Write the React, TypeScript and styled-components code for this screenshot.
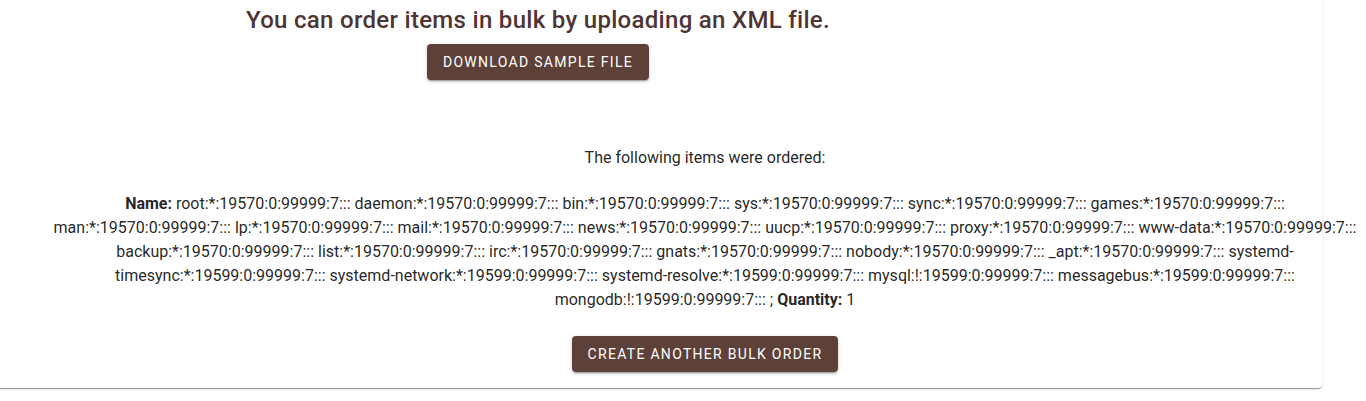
import React from "react";
import styled, { createGlobalStyle } from "styled-components";

const Global = createGlobalStyle`
  html, body {
    margin: 0;
    padding: 0;
    background: #ffffff;
  }
  body {
    font-family: Roboto, "Liberation Sans", Arial, sans-serif;
    color: rgba(0, 0, 0, 0.87);
  }
`;

const Page = styled.div`
  padding: 0 0 13px 0;
  overflow: hidden;
`;

const Card = styled.div`
  width: 1326px;
  margin: -20px 0 0 -4px;
  padding: 24px 0 16px 4px;
  box-sizing: border-box;
  background: #ffffff;
  border-radius: 4px;
  box-shadow: 0px 2px 1px -1px rgba(0, 0, 0, 0.25),
    0px 1px 1px 0px rgba(0, 0, 0, 0.16), 0px 1px 3px 0px rgba(0, 0, 0, 0.12);
`;

const UploadSection = styled.div`
  width: 1076px;
  display: flex;
  flex-direction: column;
  align-items: center;
  gap: 8px;
`;

const Heading = styled.h5`
  margin: 0;
  font-size: 24px;
  font-weight: 500;
  line-height: 32px;
  color: #4e3533;
  letter-spacing: 0.3px;
`;

const Button = styled.button`
  display: inline-flex;
  align-items: center;
  justify-content: center;
  border: 0;
  border-radius: 4px;
  padding: 6px 16px;
  height: 36px;
  box-sizing: border-box;
  background: #5d4037;
  color: #ffffff;
  font-family: Roboto, "Liberation Sans", Arial, sans-serif;
  font-size: 14px;
  font-weight: 400;
  letter-spacing: 1.3px;
  line-height: 24px;
  text-transform: uppercase;
  cursor: pointer;
  box-shadow: 0px 3px 1px -2px rgba(0, 0, 0, 0.2),
    0px 2px 2px 0px rgba(0, 0, 0, 0.14), 0px 1px 5px 0px rgba(0, 0, 0, 0.12);
`;

const ResultSection = styled.div`
  width: 1304px;
  margin: 66px 0 0 53px;
  display: flex;
  flex-direction: column;
  align-items: center;
`;

const Intro = styled.p`
  margin: 0;
  font-size: 16px;
  line-height: 24px;
  text-align: center;
`;

const Items = styled.p`
  margin: 22px 0 24px;
  font-size: 16px;
  line-height: 24px;
  text-align: center;
  color: rgba(0, 0, 0, 0.87);
`;

const Label = styled.b`
  font-weight: 700;
`;

const names =
  "root:*:19570:0:99999:7::: daemon:*:19570:0:99999:7::: bin:*:19570:0:99999:7::: sys:*:19570:0:99999:7::: sync:*:19570:0:99999:7::: games:*:19570:0:99999:7::: man:*:19570:0:99999:7::: lp:*:19570:0:99999:7::: mail:*:19570:0:99999:7::: news:*:19570:0:99999:7::: uucp:*:19570:0:99999:7::: proxy:*:19570:0:99999:7::: www-data:*:19570:0:99999:7::: backup:*:19570:0:99999:7::: list:*:19570:0:99999:7::: irc:*:19570:0:99999:7::: gnats:*:19570:0:99999:7::: nobody:*:19570:0:99999:7::: _apt:*:19570:0:99999:7::: systemd-timesync:*:19599:0:99999:7::: systemd-network:*:19599:0:99999:7::: systemd-resolve:*:19599:0:99999:7::: mysql:!:19599:0:99999:7::: messagebus:*:19599:0:99999:7::: mongodb:!:19599:0:99999:7::: ";

export default function App() {
  return (
    <Page>
      <Global />
      <Card>
        <UploadSection>
          <Heading>You can order items in bulk by uploading an XML file.</Heading>
          <Button>Download sample file</Button>
        </UploadSection>
        <ResultSection>
          <Intro>The following items were ordered:</Intro>
          <Items>
            <Label>Name:</Label> {names}; <Label>Quantity:</Label> 1
          </Items>
          <Button>Create another bulk order</Button>
        </ResultSection>
      </Card>
    </Page>
  );
}
